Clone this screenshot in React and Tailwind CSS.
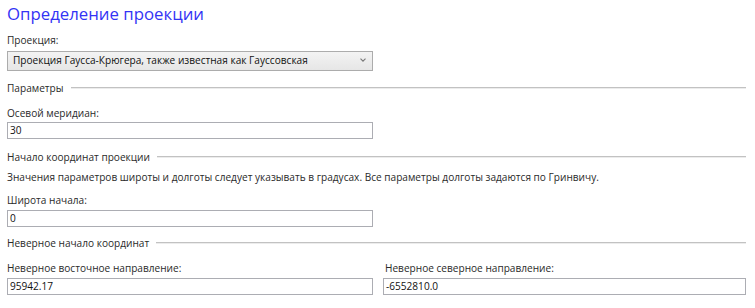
export default function App() {
  const Section = ({ title, className }) => (
    <div className={`flex items-center h-[16px] leading-[16px] ${className}`}>
      <span className="whitespace-nowrap">{title}</span>
      <div className="flex-1 ml-[7px] border-t border-[#c2c2c2] border-b border-b-[#ececec]" />
    </div>
  );

  const Field = ({ value }) => (
    <div className="h-[17px] border border-[#acadb3] bg-white px-[2px] leading-[15px] text-[#111]">
      {value}
    </div>
  );

  return (
    <div className="w-[755px] h-[308px] bg-white pl-[7px] pr-[9px] font-['Open_Sans',sans-serif] text-[10.1px] text-[#2a2a2a] overflow-hidden">
      <div className="h-[28px] flex items-center text-[16.8px] text-[#3333f5] leading-none">
        Определение проекции
      </div>

      <div className="mt-[4px] leading-[16px]">Проекция:</div>
      <div className="mt-[3px] w-[366px] h-[20px] flex items-center justify-between border border-[#acacac] bg-gradient-to-b from-[#f3f3f3] to-[#e6e6e6] pl-[5px] pr-[6px] text-[#111]">
        <span className="whitespace-nowrap">Проекция Гаусса-Крюгера, также известная как Гауссовская</span>
        <svg width="6" height="4" viewBox="0 0 6 4" className="mb-[2px]">
          <path d="M0.5 0.6 L3 3.2 L5.5 0.6" fill="none" stroke="#7a7a7a" strokeWidth="1.1" />
        </svg>
      </div>

      <Section title="Параметры" className="mt-[9px]" />

      <div className="mt-[9px] leading-[16px]">Осевой меридиан:</div>
      <div className="mt-[1px] w-[366px]">
        <Field value="30" />
      </div>

      <Section title="Начало координат проекции" className="mt-[10px]" />

      <div className="mt-[4px] leading-[16px] whitespace-nowrap">
        Значения параметров широты и долготы следует указывать в градусах. Все параметры долготы задаются по Гринвичу.
      </div>

      <div className="mt-[7px] leading-[16px]">Широта начала:</div>
      <div className="mt-[2px] w-[366px]">
        <Field value="0" />
      </div>

      <Section title="Неверное начало координат" className="mt-[8px]" />

      <div className="mt-[9px] grid grid-cols-[366px_1fr] gap-x-[10px] gap-y-[2px]">
        <div className="leading-[16px]">Неверное восточное направление:</div>
        <div className="leading-[16px] pl-[2px]">Неверное северное направление:</div>
        <Field value="95942.17" />
        <Field value="-6552810.0" />
      </div>
    </div>
  );
}
